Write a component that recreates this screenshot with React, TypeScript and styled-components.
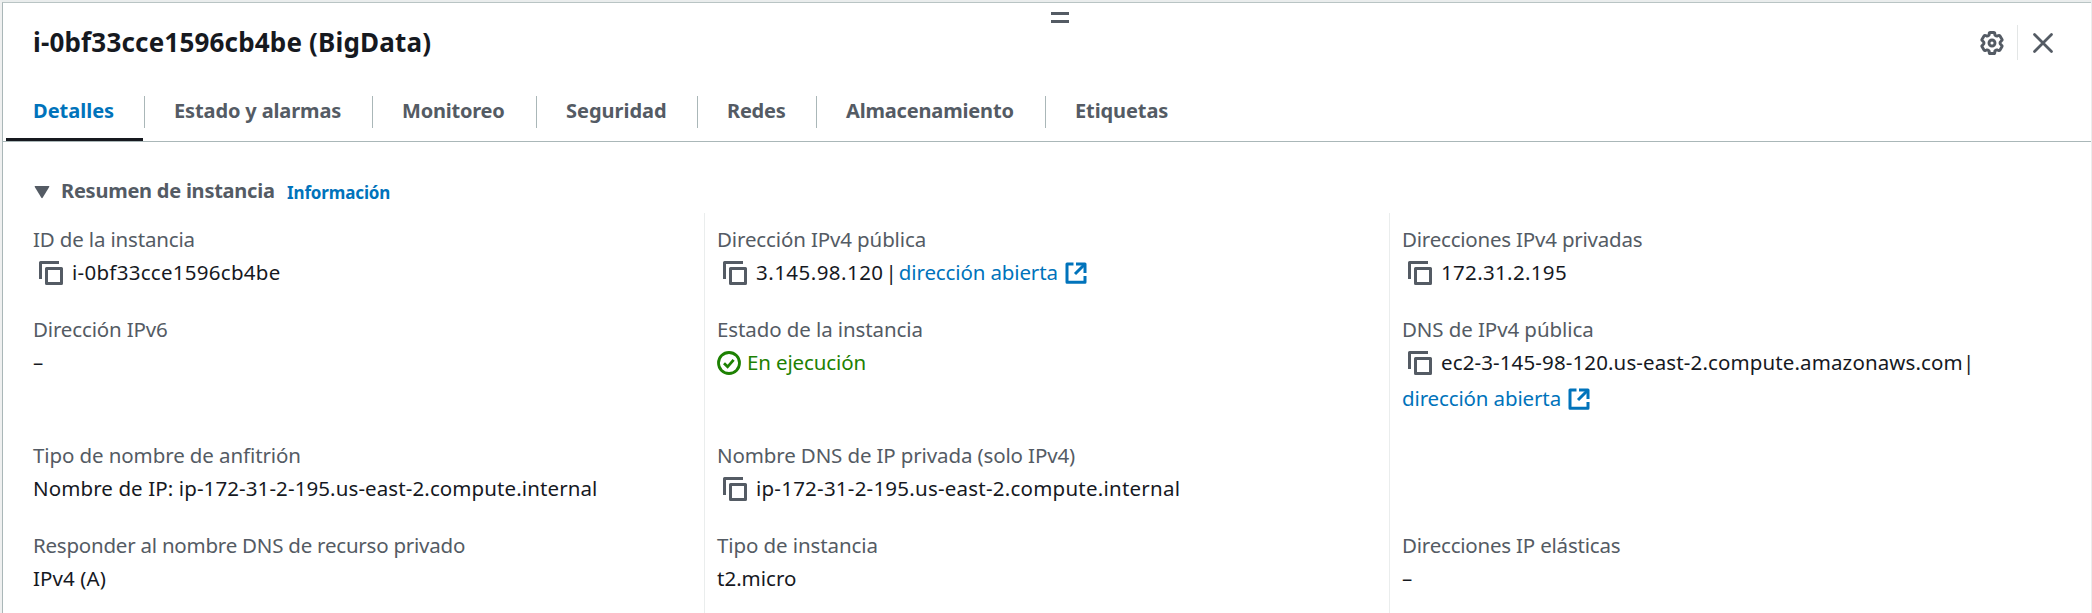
import React from "react";
import styled, { createGlobalStyle } from "styled-components";

const Global = createGlobalStyle`
  *, *::before, *::after { box-sizing: border-box; }
  html, body, #root { height: 100%; margin: 0; }
  body {
    background: #fff;
    color: #16191f;
    font-family: "Noto Sans", "Open Sans", sans-serif;
    overflow: hidden;
  }
`;

const Panel = styled.main`
  height: 613px;
  border-left: 2px solid #eff0f0;
  border-top: 2px solid #eaeded;
  border-right: 1px solid #eaeded;
  overflow: hidden;
`;

const PanelBody = styled.div`
  position: relative;
  height: 100%;
  border-left: 1px solid #aab7b8;
  border-top: 1px solid #b9c4c4;
`;

const DragHandle = styled.div`
  position: absolute;
  top: 9px;
  left: 1048px;
  width: 18px;
  height: 11px;
  border-top: 3px solid #545b64;
  border-bottom: 3px solid #545b64;
`;

const Header = styled.header`
  display: flex;
  justify-content: space-between;
  height: 93px;
  padding: 21px 37px 0 30px;
`;

const Title = styled.h2`
  margin: 0;
  font-size: 26px;
  line-height: 36px;
  font-weight: 700;
  letter-spacing: 0.18px;
`;

const Actions = styled.div`
  display: flex;
  align-items: center;
  height: 35px;
  margin-top: 1px;
  color: #545b64;
`;

const IconButton = styled.button`
  display: flex;
  padding: 0;
  border: 0;
  background: none;
  color: inherit;
`;

const ActionDivider = styled.span`
  width: 1px;
  height: 35px;
  margin: 0 14px 0 13px;
  background: #e3e6e6;
`;

const TabList = styled.nav`
  display: flex;
  height: 46px;
  padding-left: 3px;
  border-bottom: 1px solid #aab7b8;
`;

const Tab = styled.a<{ $width: number; $track?: number; $active?: boolean }>`
  width: ${(p) => p.$width}px;
  height: ${(p) => (p.$active ? 45 : 32)}px;
  color: ${(p) => (p.$active ? "#0073bb" : "#545b64")};
  font-size: 20px;
  line-height: 30px;
  font-weight: 700;
  letter-spacing: ${(p) => p.$track ?? 0}px;
`;

const TabLabel = styled.span<{ $active?: boolean; $last?: boolean }>`
  display: block;
  height: 32px;
  padding-left: ${(p) => (p.$active ? 27 : 29)}px;
  border-right: ${(p) => (p.$last ? "0" : "1px solid #aab7b8")};
`;

const ActiveBar = styled.span`
  display: block;
  width: 137px;
  height: 3px;
  margin-top: 10px;
  background: #16191f;
`;

const SectionHeader = styled.div`
  display: flex;
  align-items: flex-start;
  height: 71px;
  padding: 34px 0 0 31px;
`;

const SectionTitle = styled.h3`
  margin: 0 0 0 11px;
  width: 226px;
  color: #545b64;
  font-size: 20px;
  line-height: 30px;
  font-weight: 700;
  letter-spacing: -0.24px;
`;

const InfoLink = styled.a`
  color: #0073bb;
  font-size: 17px;
  line-height: 34px;
  font-weight: 700;
  letter-spacing: -0.14px;
`;

const Caret = styled.svg`
  margin-top: 10px;
`;

const Details = styled.dl`
  display: grid;
  grid-template-columns: 671px 685px 1fr;
  margin: 0;
  padding-left: 30px;
`;

const Field = styled.div<{ $first?: boolean; $divided?: boolean }>`
  padding: ${(p) => (p.$first ? 11 : 0)}px 0 24px ${(p) => (p.$divided ? 12 : 0)}px;
  border-left: ${(p) => (p.$divided ? "1px solid #eaeded" : "0")};
`;

const Label = styled.dt<{ $track: number }>`
  color: #545b64;
  font-size: 20.5px;
  line-height: 30px;
  letter-spacing: ${(p) => p.$track}px;
  white-space: nowrap;
`;

const Value = styled.dd<{ $track?: number }>`
  display: flex;
  align-items: center;
  height: 36px;
  margin: 0;
  font-size: 20.5px;
  line-height: 36px;
  letter-spacing: ${(p) => p.$track ?? 0}px;
  white-space: nowrap;
`;

const Pipe = styled.span<{ $tight?: boolean }>`
  margin: 0 2px 0 ${(p) => (p.$tight ? 0 : 2)}px;
  letter-spacing: 0;
`;

const Link = styled.a`
  display: flex;
  align-items: center;
  gap: 7px;
  color: #0073bb;
  letter-spacing: -0.13px;
`;

const Status = styled.span`
  display: flex;
  align-items: center;
  gap: 6px;
  color: #1d8102;
`;

const CopyGlyph = styled.svg`
  flex: none;
  margin: 2px 9px 0 6px;
  color: #545b64;
`;

const InlineIcon = styled.svg`
  flex: none;
  margin-top: 2px;
`;

const Copy = () => (
  <CopyGlyph width="24" height="24" viewBox="0 0 24 24" fill="none" stroke="currentColor" strokeWidth="3" strokeLinejoin="round">
    <path d="M1.5 18V1.5H20" />
    <path d="M7.5 7.5h15v15h-15z" />
  </CopyGlyph>
);

const OpenAddress = () => (
  <Link>
    dirección abierta
    <InlineIcon width="22" height="22" viewBox="0 0 22 22" fill="none" stroke="currentColor" strokeWidth="3">
      <path d="M8.5 2H2v18.3h18V14" strokeLinejoin="round" />
      <path d="M11 2h9v9" strokeLinejoin="round" />
      <path d="M19.5 2.5 10 12" />
    </InlineIcon>
  </Link>
);

const Gear = () => (
  <svg width="24" height="24" viewBox="0 0 24 24" fill="none" stroke="currentColor" strokeWidth="2.9" strokeLinejoin="round">
    <path d="M9.2 2.6Q9.2 1.5 10.3 1.5h3.4q1.1 0 1.1 1.1v1.2q.9 1.6 2.6 1.2l1-.5q1-.4 1.6.6l1.9 3.1q.6 1-.4 1.6l-.6.5q-.9.7-.9 1.7t.9 1.7l.6.5q1 .6.4 1.6L20 18.9q-.6 1-1.6.6l-1-.5q-1.700-.4-2.600 1.200v1.200q0 1.100-1.100 1.100h-3.400q-1.100 0-1.100-1.100v-1.200q-.9-1.600-2.600-1.200l-1 .5q-1 .4-1.600-.6L2.100 15.800q-.6-1 .4-1.600l.6-.5q.9-.7.9-1.700t-.9-1.700l-.6-.5q-1-.6-.4-1.600L4 5.100q.6-1 1.600-.6l1 .5q1.700.4 2.600-1.200z" />
    <circle cx="12" cy="12" r="3" />
  </svg>
);

const tabs = [
  { label: "Detalles", width: 139, track: 0, active: true },
  { label: "Estado y alarmas", width: 228, track: -0.13 },
  { label: "Monitoreo", width: 164, track: -0.22 },
  { label: "Seguridad", width: 161, track: -0.02 },
  { label: "Redes", width: 119, track: -0.24 },
  { label: "Almacenamiento", width: 229, track: -0.17 },
  { label: "Etiquetas", width: 140, track: -0.1, last: true },
];

export default function App() {
  return (
    <>
      <Global />
      <Panel>
        <PanelBody>
          <DragHandle />
          <Header>
            <Title>i-0bf33cce1596cb4be (BigData)</Title>
            <Actions>
              <IconButton aria-label="Preferencias"><Gear /></IconButton>
              <ActionDivider />
              <IconButton aria-label="Cerrar">
                <svg width="22" height="22" viewBox="0 0 22 22" fill="none" stroke="currentColor" strokeWidth="2.8" strokeLinecap="round">
                  <path d="m2.5 2.5 17 17M19.5 2.5l-17 17" />
                </svg>
              </IconButton>
            </Actions>
          </Header>
          <TabList>
            {tabs.map((t) => (
              <Tab key={t.label} $width={t.width} $track={t.track} $active={t.active}>
                <TabLabel $active={t.active} $last={t.last}>{t.label}</TabLabel>
                {t.active && <ActiveBar />}
              </Tab>
            ))}
          </TabList>
          <SectionHeader>
            <Caret width="16" height="13" viewBox="0 0 16 13" fill="#545b64">
              <path d="M1.2 0h13.6q1 0 .4 1L8.8 11.6q-.8 1.2-1.6 0L.8 1Q.2 0 1.2 0z" />
            </Caret>
            <SectionTitle>Resumen de instancia</SectionTitle>
            <InfoLink>Información</InfoLink>
          </SectionHeader>
          <Details>
            <Field $first>
              <Label $track={-0.16}>ID de la instancia</Label>
              <Value $track={0.28}><Copy />i-0bf33cce1596cb4be</Value>
            </Field>
            <Field $first $divided>
              <Label $track={-0.13}>Dirección IPv4 pública</Label>
              <Value $track={0.46}><Copy />3.145.98.120<Pipe>|</Pipe><OpenAddress /></Value>
            </Field>
            <Field $first $divided>
              <Label $track={-0.21}>Direcciones IPv4 privadas</Label>
              <Value $track={0.33}><Copy />172.31.2.195</Value>
            </Field>

            <Field>
              <Label $track={-0.15}>Dirección IPv6</Label>
              <Value>–</Value>
            </Field>
            <Field $divided>
              <Label $track={-0.1}>Estado de la instancia</Label>
              <Value $track={-0.13}>
                <Status>
                  <InlineIcon width="24" height="24" viewBox="0 0 24 24" fill="none" stroke="currentColor" strokeWidth="2.8">
                    <circle cx="12" cy="12" r="10.5" />
                    <path d="m7 12.2 3.6 3.6 6-7" />
                  </InlineIcon>
                  En ejecución
                </Status>
              </Value>
            </Field>
            <Field $divided>
              <Label $track={-0.09}>DNS de IPv4 pública</Label>
              <Value $track={0.12}><Copy />ec2-3-145-98-120.us-east-2.compute.amazonaws.com<Pipe $tight>|</Pipe></Value>
              <Value><OpenAddress /></Value>
            </Field>

            <Field>
              <Label $track={-0.1}>Tipo de nombre de anfitrión</Label>
              <Value $track={0.1}>Nombre de IP: ip-172-31-2-195.us-east-2.compute.internal</Value>
            </Field>
            <Field $divided>
              <Label $track={-0.13}>Nombre DNS de IP privada (solo IPv4)</Label>
              <Value $track={0.23}><Copy />ip-172-31-2-195.us-east-2.compute.internal</Value>
            </Field>
            <Field $divided />

            <Field>
              <Label $track={-0.23}>Responder al nombre DNS de recurso privado</Label>
              <Value $track={0.1}>IPv4 (A)</Value>
            </Field>
            <Field $divided>
              <Label $track={-0.09}>Tipo de instancia</Label>
              <Value $track={0}>t2.micro</Value>
            </Field>
            <Field $divided>
              <Label $track={-0.21}>Direcciones IP elásticas</Label>
              <Value>–</Value>
            </Field>
          </Details>
        </PanelBody>
      </Panel>
    </>
  );
}
